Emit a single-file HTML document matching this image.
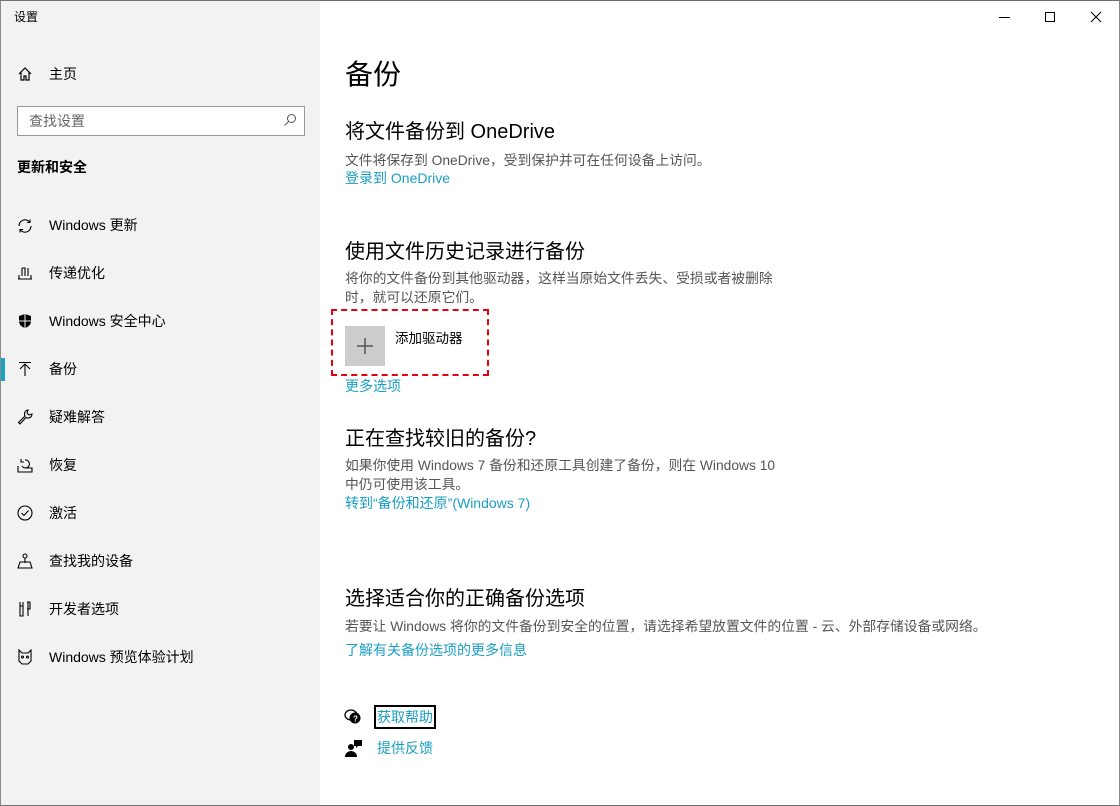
<!DOCTYPE html>
<html><head><meta charset="utf-8"><style>
*{margin:0;padding:0;box-sizing:border-box}
body{width:1120px;height:806px;overflow:hidden;background:#fff;font-family:"Liberation Sans","Noto Sans CJK SC",sans-serif;position:relative;color:#000}
.win{position:absolute;left:0;top:0;width:1120px;height:806px;border:1px solid #6f6f6f;border-left:1px solid #8a8a8a;border-right:1px solid #8a8a8a}
.side{position:absolute;left:1px;top:1px;width:319px;height:804px;background:#f2f2f2}
.t{position:absolute;white-space:nowrap}
.nav{position:absolute;left:49px;font-size:14px;color:#000}
.ic{position:absolute;left:17px}
.link{color:#1a9fc4;font-size:14px}
.g{color:#555;font-size:13.8px}
.h{font-size:20px}
</style></head><body>
<div class="win"></div>
<div class="side"></div>
<div class="t" style="left:14px;top:8px;font-size:12px">设置</div>
<div class="t" style="left:999px;top:17px;width:11px;height:1px;background:#000"></div>
<div class="t" style="left:1045px;top:12px;width:10px;height:10px;border:1px solid #000"></div>
<svg class="t" style="left:1090px;top:11px" width="12" height="12"><path d="M1 1L11 11M11 1L1 11" stroke="#000" stroke-width="1"/></svg>

<svg class="ic" style="top:66px" width="16" height="16" fill="none" stroke="#000" stroke-width="1.2"><path d="M2 8L8 2L14 8M4 6V14H7V10H9V14H12V6"/></svg>
<div class="nav" style="top:64px">主页</div>
<div class="t" style="left:17px;top:106px;width:288px;height:30px;border:1px solid #999;background:#fff"></div>
<div class="t" style="left:29px;top:111px;font-size:14px;color:#666">查找设置</div>
<svg class="t" style="left:283px;top:113px" width="14" height="14" fill="none" stroke="#555"><circle cx="8.5" cy="5.5" r="4"/><path d="M6 8L1.5 12.5"/></svg>
<div class="t" style="left:17px;top:157px;font-size:14px;font-weight:bold">更新和安全</div>

<svg class="ic" style="top:218px" width="16" height="16" fill="none" stroke="#000" stroke-width="1.1"><path d="M2 8A6 6 0 0 1 13 4.5M14 8A6 6 0 0 1 3 11.5M13 1.5V4.5H10M3 14.5V11.5H6"/></svg>
<div class="nav" style="top:215px">Windows 更新</div>
<svg class="ic" style="top:265px" width="16" height="16" fill="none" stroke="#000" stroke-width="1.1"><path d="M1 14H15M2 14V10M14 14V10M5 11V3M11 11V3M5 3H8V11"/></svg>
<div class="nav" style="top:263px">传递优化</div>
<svg class="ic" style="top:313px" width="16" height="16"><path d="M8 1L14 3V8C14 12 11 14 8 15C5 14 2 12 2 8V3Z" fill="#000"/><path d="M8 1V15M2 8H14" stroke="#f2f2f2" stroke-width="1"/></svg>
<div class="nav" style="top:311px">Windows 安全中心</div>

<div class="t" style="left:1px;top:358px;width:4px;height:23px;background:#1aa3c4"></div>
<svg class="ic" style="top:361px" width="16" height="16" fill="none" stroke="#000" stroke-width="1.1"><path d="M2 1.5H14M8 3V15M3 8L8 3L13 8"/></svg>
<div class="nav" style="top:359px">备份</div>
<svg class="ic" style="top:409px" width="16" height="16" fill="none" stroke="#000" stroke-width="1.1"><path d="M11 1A4 4 0 0 0 8 7L1.5 13.5L3 15L9 8.5A4 4 0 0 0 15 5L12 6L10 4Z"/></svg>
<div class="nav" style="top:407px">疑难解答</div>
<svg class="ic" style="top:457px" width="16" height="16" fill="none" stroke="#000" stroke-width="1.1"><path d="M1 9V15H15V11H8M8 3A4 4 0 1 1 5 9M4 2V5H7"/></svg>
<div class="nav" style="top:455px">恢复</div>
<svg class="ic" style="top:505px" width="16" height="16" fill="none" stroke="#000" stroke-width="1.1"><circle cx="8" cy="8" r="7"/><path d="M4.5 8L7 10.5L11.5 5.5"/></svg>
<div class="nav" style="top:503px">激活</div>
<svg class="ic" style="top:553px" width="16" height="16" fill="none" stroke="#000" stroke-width="1.1"><circle cx="8" cy="3" r="2"/><path d="M8 5V10M1 15L3 9H13L15 15Z"/></svg>
<div class="nav" style="top:551px">查找我的设备</div>
<svg class="ic" style="top:601px" width="16" height="16" fill="none" stroke="#000" stroke-width="1.1"><path d="M3 1V5M6 1V5M3 5H6V15H3ZM11 1V15M10 1H13V8H10"/></svg>
<div class="nav" style="top:599px">开发者选项</div>
<svg class="ic" style="top:649px" width="16" height="16" fill="none" stroke="#000" stroke-width="1.1"><path d="M2 1L5 4H11L14 1V12L11 15H5L2 12Z"/><circle cx="5.5" cy="8" r="1"/><circle cx="10.5" cy="8" r="1"/></svg>
<div class="nav" style="top:647px">Windows 预览体验计划</div>

<div class="t" style="left:345px;top:53px;font-size:28px">备份</div>
<div class="t h" style="left:345px;top:115px">将文件备份到 OneDrive</div>
<div class="t g" style="left:345px;top:149px">文件将保存到 OneDrive，受到保护并可在任何设备上访问。</div>
<div class="t link" style="left:345px;top:168px">登录到 OneDrive</div>

<div class="t h" style="left:345px;top:235px">使用文件历史记录进行备份</div>
<div class="t g" style="left:345px;top:269px;line-height:19px">将你的文件备份到其他驱动器，这样当原始文件丢失、受损或者被删除<br>时，就可以还原它们。</div>
<div class="t" style="left:331px;top:309px;width:158px;height:67px;border:2px dashed #e60012"></div>
<div class="t" style="left:345px;top:326px;width:40px;height:40px;background:#ccc"></div>
<svg class="t" style="left:356px;top:337px" width="18" height="18"><path d="M9 1V17M1 9H17" stroke="#444" stroke-width="1.3"/></svg>
<div class="t" style="left:395px;top:327px;font-size:13.5px">添加驱动器</div>
<div class="t link" style="left:345px;top:376px">更多选项</div>

<div class="t h" style="left:345px;top:422px">正在查找较旧的备份?</div>
<div class="t g" style="left:345px;top:456px;line-height:19px">如果你使用 Windows 7 备份和还原工具创建了备份，则在 Windows 10<br>中仍可使用该工具。</div>
<div class="t link" style="left:345px;top:493px">转到“备份和还原”(Windows 7)</div>

<div class="t h" style="left:345px;top:582px">选择适合你的正确备份选项</div>
<div class="t g" style="left:345px;top:615px">若要让 Windows 将你的文件备份到安全的位置，请选择希望放置文件的位置 - 云、外部存储设备或网络。</div>
<div class="t link" style="left:345px;top:640px">了解有关备份选项的更多信息</div>

<svg class="t" style="left:344px;top:708px" width="18" height="18"><ellipse cx="7" cy="7" rx="6" ry="5" fill="none" stroke="#000" stroke-width="1.3"/><circle cx="11" cy="10" r="5.5" fill="#000"/><text x="9" y="13.5" font-size="8" fill="#fff" font-weight="bold" font-family="Liberation Sans">?</text></svg>
<div class="t" style="left:374px;top:705px;width:62px;height:24px;border:2px solid #000"></div>
<div class="t link" style="left:377px;top:707px">获取帮助</div>
<svg class="t" style="left:345px;top:739px" width="18" height="18"><circle cx="6" cy="8" r="3" fill="#000"/><path d="M0 18A6 6 0 0 1 12 18Z" fill="#000"/><path d="M9 1H17V7H13L11 9V7H9Z" fill="#000"/></svg>
<div class="t link" style="left:377px;top:738px">提供反馈</div>
</body></html>
